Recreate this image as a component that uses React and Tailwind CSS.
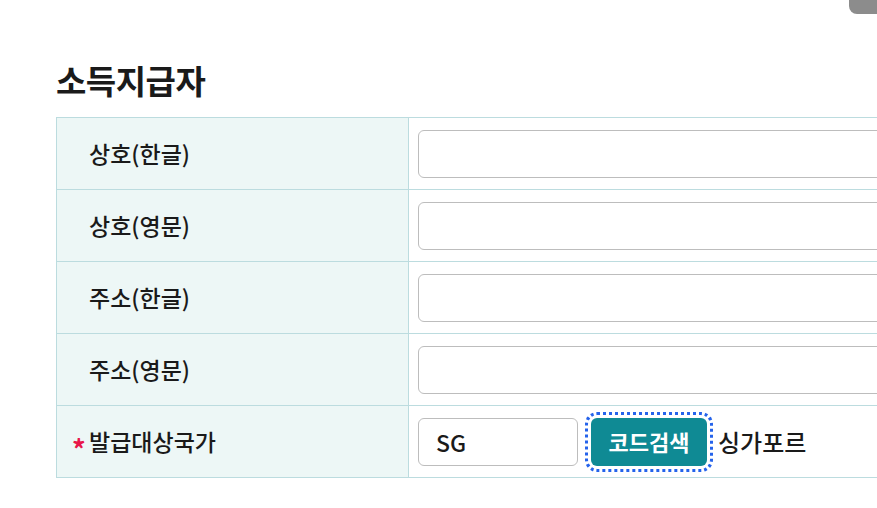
import React from "react";

const rows = [
  { label: "상호(한글)" },
  { label: "상호(영문)" },
  { label: "주소(한글)" },
  { label: "주소(영문)" },
];

export default function App() {
  return (
    <div
      className="relative w-[877px] h-[508px] overflow-hidden bg-white text-[#1a1a1a]"
      style={{ fontFamily: '"Noto Sans CJK KR", "Noto Sans", sans-serif' }}
    >
      {/* top-right tab */}
      <div className="absolute top-0 right-0 w-[28px] h-[14px] rounded-bl-lg bg-[#8c8c8c]" />

      <div className="pl-[56px] pt-[58px]">
        <h2 className="text-[33px] font-bold leading-[44px] tracking-[-0.5px]">소득지급자</h2>

        <table className="mt-[15px] w-[1000px] border-collapse">
          <tbody>
            {rows.map((r) => (
              <tr key={r.label} className="h-[72px]">
                <th className="w-[352px] border border-[#bcdcdf] bg-[#edf7f6] pl-[32px] text-left text-[23px] font-medium">
                  {r.label}
                </th>
                <td className="border border-[#bcdcdf] pl-[9px]">
                  <input
                    type="text"
                    className="h-[48px] w-[600px] rounded-md border border-[#bdbdbd] bg-white px-4 outline-none"
                  />
                </td>
              </tr>
            ))}
            <tr className="h-[72px]">
              <th className="relative w-[352px] border border-[#bcdcdf] bg-[#edf7f6] pl-[32px] text-left text-[23px] font-medium">
                <span className="absolute left-[15px] top-[29px] text-[27px] font-bold leading-none text-[#e8174a]">*</span>
                발급대상국가
              </th>
              <td className="border border-[#bcdcdf] pl-[9px]">
                <div className="flex items-center">
                  <input
                    type="text"
                    defaultValue="SG"
                    className="h-[48px] w-[160px] rounded-md border border-[#bdbdbd] bg-white px-[17px] text-[23px] font-medium outline-none"
                  />
                  <button className="ml-[13px] h-[48px] w-[116px] rounded-md bg-[#0f8a94] text-[22px] font-bold text-white outline-[3px] outline-dotted outline-offset-[3px] outline-[#2563eb]">
                    코드검색
                  </button>
                  <span className="ml-[11px] text-[24px] font-medium">싱가포르</span>
                </div>
              </td>
            </tr>
          </tbody>
        </table>
      </div>
    </div>
  );
}
